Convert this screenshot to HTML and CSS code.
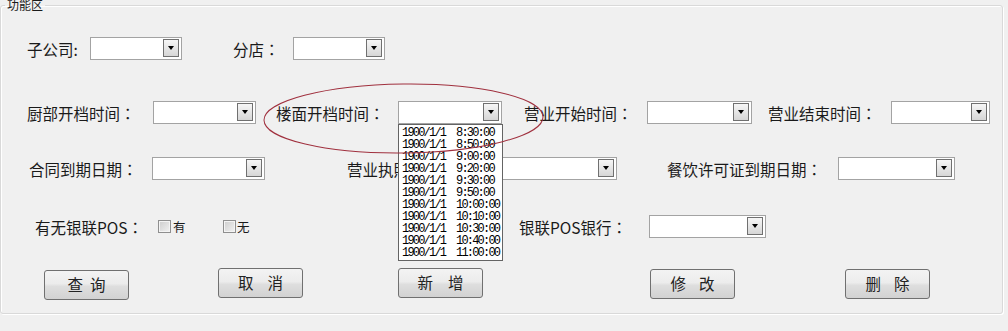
FILE: index.html
```html
<!DOCTYPE html>
<html lang="zh-CN">
<head>
<meta charset="utf-8">
<title>功能区</title>
<link rel="stylesheet" href="styles.css">
</head>
<body>
<div class="screen">
  <fieldset class="panel">
    <legend class="legend">功能区</legend>
    <div class="rows">
      <div class="row r1">
        <span class="lbl a1">子公司:</span>
        <span class="combo c92"><i class="arrow"></i></span>
        <span class="lbl a2">分店<span class="colon" lang="ja">：</span></span>
        <span class="combo c92"><i class="arrow"></i></span>
      </div>
      <div class="row r2">
        <span class="lbl b1">厨部开档时间<span class="colon" lang="ja">：</span></span>
        <span class="combo c103"><i class="arrow"></i></span>
        <span class="lbl b2">楼面开档时间<span class="colon" lang="ja">：</span></span>
        <span class="combo c104"><i class="arrow"></i></span>
        <span class="lbl b3">营业开始时间<span class="colon" lang="ja">：</span></span>
        <span class="combo c105"><i class="arrow"></i></span>
        <span class="lbl b4">营业结束时间<span class="colon" lang="ja">：</span></span>
        <span class="combo c99"><i class="arrow"></i></span>
      </div>
      <div class="row r3">
        <span class="lbl d1">合同到期日期<span class="colon" lang="ja">：</span></span>
        <span class="combo c113"><i class="arrow"></i></span>
        <span class="lbl d2">营业执照到期日期<span class="colon" lang="ja">：</span></span>
        <span class="combo c117"><i class="arrow"></i></span>
        <span class="lbl d3">餐饮许可证到期日期<span class="colon" lang="ja">：</span></span>
        <span class="combo c117"><i class="arrow"></i></span>
      </div>
      <div class="row r4">
        <span class="lbl e1">有无银联POS<span class="colon" lang="ja">：</span></span>
        <span class="check"></span>
        <span class="chk-text t1">有</span>
        <span class="check k2"></span>
        <span class="chk-text t2">无</span>
        <span class="lbl e2">银联POS银行<span class="colon" lang="ja">：</span></span>
        <span class="combo c117"><i class="arrow"></i></span>
      </div>
      <div class="row r5">
        <button class="btn g1 tight"><span>查</span><span>询</span></button>
        <button class="btn g2 up"><span>取</span><span>消</span></button>
        <button class="btn g3 wide"><span>新</span><span>增</span></button>
        <button class="btn g4"><span>修</span><span>改</span></button>
        <button class="btn g5"><span>删</span><span>除</span></button>
      </div>
    </div>
  </fieldset>

  <div class="droplist">
    <div class="opt">1900/1/1  8:30:00</div>
    <div class="opt">1900/1/1  8:50:00</div>
    <div class="opt">1900/1/1  9:00:00</div>
    <div class="opt">1900/1/1  9:20:00</div>
    <div class="opt">1900/1/1  9:30:00</div>
    <div class="opt">1900/1/1  9:50:00</div>
    <div class="opt">1900/1/1  10:00:00</div>
    <div class="opt">1900/1/1  10:10:00</div>
    <div class="opt">1900/1/1  10:30:00</div>
    <div class="opt">1900/1/1  10:40:00</div>
    <div class="opt">1900/1/1  11:00:00</div>
  </div>

  <svg class="mark" width="1008" height="331" viewBox="0 0 1008 331">
    <ellipse cx="403.5" cy="118.5" rx="139.5" ry="34.5" transform="rotate(-0.7 403.5 118.5)" fill="none" stroke="#a0303e" stroke-width="1"/>
  </svg>
</div>
</body>
</html>
```

FILE: styles.css
```css
* { box-sizing: border-box; }
html, body {
  margin: 0;
  padding: 0;
  background: #f0f0f0;
}
body {
  font-family: "Noto Sans CJK SC", "Noto Sans", sans-serif;
  color: #1a1a1a;
  overflow: hidden;
}
.screen {
  position: relative;
  width: 1008px;
  height: 331px;
  overflow: hidden;
}
.panel {
  margin: -1px 0 0 0;
  padding: 0 0 14px 0;
  width: 1003px;
  border: 1px solid #d9d9d9;
  border-radius: 3px;
  box-shadow: 1px 1px 0 #ffffff, inset 1px 1px 0 #ffffff;
}
.legend {
  margin-left: 4px;
  padding: 0 2px;
  font-size: 12px;
  line-height: 12px;
  color: #1a1a1a;
}
.rows {
  display: flex;
  flex-direction: column;
}
.row {
  display: flex;
  align-items: center;
  height: 23px;
}
.r1 { margin-top: 26px; }
.r2 { margin-top: 41px; }
.r3 { margin-top: 33px; }
.r4 { margin-top: 35px; }
.r5 { margin-top: 30px; height: 31px; align-items: flex-start; }

.lbl {
  flex: none;
  font-size: 15.5px;
  line-height: 20px;
  white-space: nowrap;
  overflow: hidden;
}
.colon {
  font-family: "Noto Sans CJK JP", "Noto Sans CJK SC", sans-serif;
}
.a1 { margin-left: 26px; width: 63px; }
.a2 { margin-left: 51px; width: 60px; }
.b1 { margin-left: 26px; width: 126px; }
.b2 { margin-left: 20px; width: 122px; }
.b3 { margin-left: 22px; width: 123px; }
.b4 { margin-left: 16px; width: 123px; }
.d1 { margin-left: 28px; width: 123px; }
.d2 { margin-left: 82px; width: 153px; }
.d3 { margin-left: 50px; width: 171px; }
.e1 { margin-left: 34px; width: 123px; }
.e2 { margin-left: 269px; width: 130px; }

.combo {
  flex: none;
  display: flex;
  justify-content: flex-end;
  align-items: flex-start;
  height: 23px;
  padding: 1px 2px 0 0;
  background: #ffffff;
  border: 1px solid #a3a3a3;
}
.c92 { width: 92px; }
.c99 { width: 99px; }
.c103 { width: 103px; }
.c104 { width: 104px; }
.c105 { width: 105px; }
.c113 { width: 113px; }
.c117 { width: 117px; }
.arrow {
  display: flex;
  justify-content: center;
  align-items: center;
  width: 16px;
  height: 18px;
  border: 1px solid #707070;
  background: linear-gradient(#f6f6f6, #d6d6d6);
}
.arrow::after {
  content: "";
  width: 0;
  height: 0;
  border-left: 3.5px solid transparent;
  border-right: 3.5px solid transparent;
  border-top: 4px solid #000;
}

.check {
  flex: none;
  width: 13px;
  height: 13px;
  border: 1px solid #8f8f8f;
  background: linear-gradient(135deg, #cdcdcd, #f2f2f2);
  box-shadow: inset 0 0 0 1px #f4f4f4;
}
.check.k2 { margin-left: 37px; }
.chk-text {
  flex: none;
  font-size: 12.5px;
  line-height: 14px;
}
.t1 { margin-left: 2px; width: 13px; }
.t2 { margin-left: 1px; width: 13px; }

.btn {
  flex: none;
  display: flex;
  justify-content: center;
  align-items: center;
  gap: 13px;
  width: 85px;
  height: 30px;
  padding: 0 0 3px 0;
  border: 1px solid #707070;
  border-radius: 3px;
  background: linear-gradient(#f3f3f3 0%, #ececec 45%, #dedede 55%, #d2d2d2 100%);
  font-family: "Noto Sans CJK SC", sans-serif;
  font-size: 15.5px;
  line-height: 18px;
  color: #222;
}
.btn.tight { gap: 7px; }
.btn.up { gap: 14px; }
.btn.wide { gap: 15px; }
.g1 { margin-left: 43px; margin-top: 2px; }
.g2 { margin-left: 89px; }
.g3 { margin-left: 95px; }
.g4 { margin-left: 167px; margin-top: 1px; }
.g5 { margin-left: 110px; margin-top: 1px; }

.droplist {
  position: absolute;
  left: 398px;
  top: 124px;
  width: 105px;
  height: 137px;
  padding: 2px 0 0 3px;
  background: #ffffff;
  border: 1px solid #646464;
  overflow: hidden;
  font-family: "Liberation Mono", monospace;
  font-size: 12px;
  letter-spacing: -1.8px;
  line-height: 12px;
  color: #000;
}
.opt {
  height: 12px;
  white-space: pre;
}
.mark {
  position: absolute;
  left: 0;
  top: 0;
  pointer-events: none;
}
```
